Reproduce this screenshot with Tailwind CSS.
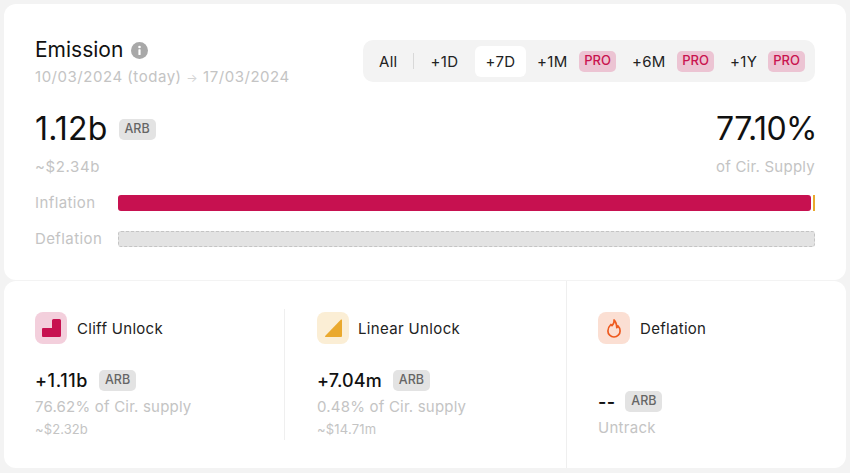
<!DOCTYPE html>
<html lang="en">
<head>
  <meta charset="UTF-8">
  <title>Emission</title>
  <script src="https://cdn.jsdelivr.net/npm/@tailwindcss/browser@4"></script>
</head>
<body class="bg-[#f3f3f3] font-['Inter',sans-serif] w-[850px] h-[473px] overflow-hidden">
  <div class="pt-[4px] px-[4px]">
    <!-- top card -->
    <section class="bg-white rounded-[12px] h-[276px] pl-[31px] pr-[31px] pt-[34px]">
      <div class="flex justify-between">
        <div>
          <div class="flex items-center gap-[8px] h-[24px]">
            <h2 class="text-[21px] leading-[24px] text-[#111]">Emission</h2>
            <svg class="mt-[1px]" width="17" height="17" viewBox="0 0 17 17"><circle cx="8.5" cy="8.5" r="8.5" fill="#a8a8a8"/><circle cx="8.5" cy="5" r="1.3" fill="#fff"/><rect x="7.4" y="7.2" width="2.2" height="5.8" rx="0.6" fill="#fff"/></svg>
          </div>
          <p class="mt-[5px] text-[15px] leading-[20px] tracking-[0.53px] text-[#c4c4c4] whitespace-nowrap">10/03/2024 (today) <span class="text-[12px] text-[#d4d4d4]">→</span> 17/03/2024</p>
        </div>
        <div class="flex items-center h-[42px] mt-[2px] bg-[#f3f3f3] rounded-[10px] text-[15px] tracking-[0.3px] text-[#222] whitespace-nowrap">
          <span class="w-[50px] pl-[16px] pt-[2px]">All</span>
          <span class="w-px h-[16px] bg-[#d8d8d8]"></span>
          <span class="w-[61px] text-center pt-[2px]">+1D</span>
          <span class="w-[51px] h-[31px] pt-[2px] flex items-center justify-center bg-white rounded-[6px]">+7D</span>
          <span class="ml-[11px] w-[31px] pt-[2px]">+1M</span>
          <span class="ml-[11px] w-[37px] h-[21px] flex items-center justify-center bg-[#ecc4d3] text-[#c9134f] rounded-[5px] text-[13px] tracking-normal font-medium">PRO</span>
          <span class="ml-[16px] w-[33px] pt-[2px]">+6M</span>
          <span class="ml-[12px] w-[37px] h-[21px] flex items-center justify-center bg-[#ecc4d3] text-[#c9134f] rounded-[5px] text-[13px] tracking-normal font-medium">PRO</span>
          <span class="ml-[16px] w-[27px] pt-[2px]">+1Y</span>
          <span class="ml-[11px] mr-[10px] w-[37px] h-[21px] flex items-center justify-center bg-[#ecc4d3] text-[#c9134f] rounded-[5px] text-[13px] tracking-normal font-medium">PRO</span>
        </div>
      </div>
      <div class="flex justify-between mt-[21px]">
        <div>
          <div class="flex items-center gap-[11px] h-[40px]">
            <span class="text-[32px] leading-[40px] tracking-[0.2px] text-[#111]">1.12b</span>
            <span class="w-[37px] h-[21px] flex items-center justify-center bg-[#e3e3e3] text-[#666] rounded-[5px] text-[12.5px] font-medium">ARB</span>
          </div>
          <p class="mt-[8px] text-[15px] leading-[20px] tracking-[0.6px] text-[#c4c4c4]">~$2.34b</p>
        </div>
        <div class="text-right">
          <div class="text-[32px] leading-[40px] text-[#111] tracking-[-0.5px] mr-[-2px]">77.10%</div>
          <p class="mt-[8px] text-[15px] leading-[20px] tracking-[0.25px] text-[#c4c4c4]">of Cir. Supply</p>
        </div>
      </div>
      <div class="flex items-center mt-[16px] h-[20px]">
        <span class="w-[83px] text-[15px] tracking-[0.4px] text-[#c4c4c4]">Inflation</span>
        <div class="flex-1 flex justify-between h-[16px]">
          <div class="w-[693px] bg-[#c71150] rounded-[3px]"></div>
          <div class="w-[2px] bg-[#eaa92e]"></div>
        </div>
      </div>
      <div class="flex items-center mt-[16px] h-[20px]">
        <span class="w-[83px] text-[15px] tracking-[0.4px] text-[#c4c4c4]">Deflation</span>
        <div class="flex-1 h-[16px] bg-[#e3e3e3] border border-dashed border-[#c4c4c4] rounded-[3px]"></div>
      </div>
    </section>

    <!-- bottom card -->
    <section class="mt-[1px] bg-white rounded-[12px] h-[187px] flex">
      <div class="w-[562px] flex pt-[28px] h-[159px]">
        <div class="w-[281px] pl-[31px] pt-[3px] border-r border-[#efefef]">
          <div class="flex items-center gap-[10px]">
            <span class="w-[32px] h-[32px] rounded-[8px] bg-[#f3cfdc] flex items-center justify-center">
              <svg width="19" height="18" viewBox="0 0 19 18"><path d="M10 1.500a1.500 1.500 0 0 1 1.500-1.500h6a1.500 1.500 0 0 1 1.500 1.500v15a1.500 1.500 0 0 1-1.500 1.500h-16.500a1 1 0 0 1-1-1V10a1 1 0 0 1 1-1h9z" fill="#c71150"/></svg>
            </span>
            <span class="pt-[2px] text-[15px] tracking-[0.3px] text-[#222]">Cliff Unlock</span>
          </div>
          <div class="flex items-center gap-[11px] mt-[26px] h-[21px]">
            <span class="text-[18px] tracking-[0.6px] font-medium text-[#111]">+1.11b</span>
            <span class="w-[37px] h-[21px] flex items-center justify-center bg-[#e3e3e3] text-[#666] rounded-[5px] text-[12.5px] font-medium">ARB</span>
          </div>
          <p class="mt-[6px] text-[15px] leading-[20px] tracking-[0.2px] text-[#c4c4c4]">76.62% of Cir. supply</p>
          <p class="mt-[4px] text-[13px] leading-[16px] tracking-[0.1px] text-[#c4c4c4]">~$2.32b</p>
        </div>
        <div class="w-[281px] pl-[32px] pt-[3px]">
          <div class="flex items-center gap-[9px]">
            <span class="w-[32px] h-[32px] rounded-[8px] bg-[#fbeed5] flex items-center justify-center">
              <svg width="18" height="18" viewBox="0 0 18 18"><path d="M18 1V17a1 1 0 0 1-1 1H1.500a.6.6 0 0 1-.4-1L17 .6a.6.6 0 0 1 1 .4z" fill="#eaa92e"/></svg>
            </span>
            <span class="pt-[2px] text-[15px] tracking-[0.35px] text-[#222]">Linear Unlock</span>
          </div>
          <div class="flex items-center gap-[11px] mt-[26px] h-[21px]">
            <span class="text-[18px] tracking-[0.15px] font-medium text-[#111]">+7.04m</span>
            <span class="w-[37px] h-[21px] flex items-center justify-center bg-[#e3e3e3] text-[#666] rounded-[5px] text-[12.5px] font-medium">ARB</span>
          </div>
          <p class="mt-[6px] text-[15px] leading-[20px] tracking-[0.2px] text-[#c4c4c4]">0.48% of Cir. supply</p>
          <p class="mt-[4px] text-[13px] leading-[16px] tracking-[0.2px] text-[#c4c4c4]">~$14.71m</p>
        </div>
      </div>
      <div class="flex-1 border-l border-[#efefef] pl-[31px] pt-[31px]">
        <div class="flex items-center gap-[10px]">
          <span class="w-[32px] h-[32px] rounded-[8px] bg-[#fbdfd3] flex items-center justify-center">
            <svg width="14" height="19" viewBox="0 0 14 19" fill="none"><path d="M7 1c.6 2.600-.7 4.200-2 5.600L3.900 5.500C2 7.300.9 9.400.9 11.900a6.100 6.100 0 0 0 12.200 0c0-2-1-3.800-2.200-5-.2.700-.6 1.300-1.100 1.700C9.600 5.500 8.800 2.600 7 1z" stroke="#ee5a1f" stroke-width="1.700" stroke-linejoin="round"/></svg>
          </span>
          <span class="pt-[2px] text-[15px] tracking-[0.3px] text-[#222]">Deflation</span>
        </div>
        <div class="flex items-center gap-[10px] mt-[47px] h-[21px]">
          <span class="text-[18px] tracking-[0.3px] font-semibold text-[#111]">--</span>
          <span class="w-[37px] h-[21px] flex items-center justify-center bg-[#e3e3e3] text-[#666] rounded-[5px] text-[12.5px] font-medium">ARB</span>
        </div>
        <p class="mt-[6px] text-[15px] leading-[20px] tracking-[0.3px] text-[#c4c4c4]">Untrack</p>
      </div>
    </section>
  </div>
</body>
</html>
